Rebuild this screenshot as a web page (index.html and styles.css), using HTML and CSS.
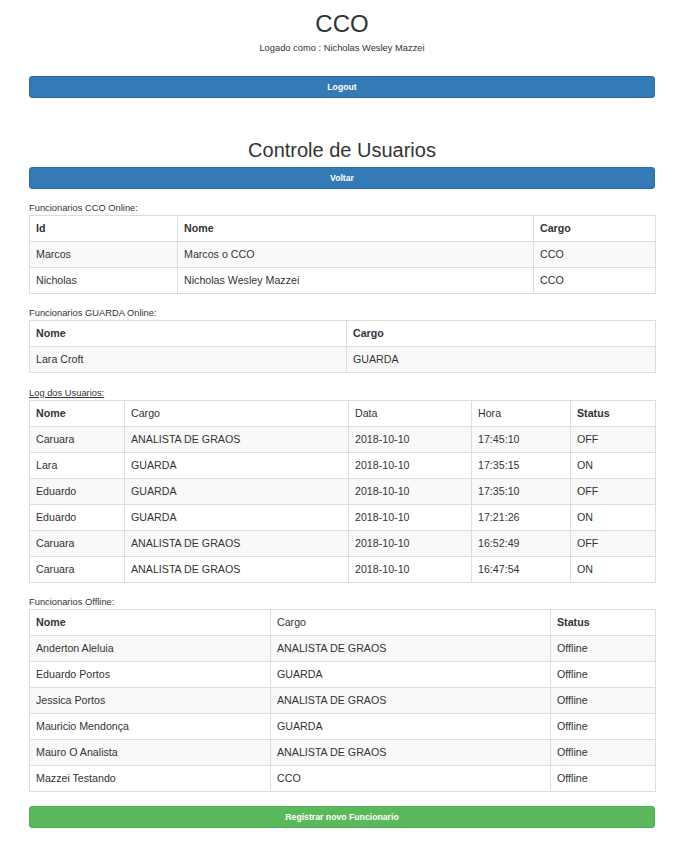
FILE: index.html
```html
<!DOCTYPE html>
<html lang="pt">
<head>
<meta charset="utf-8">
<title>CCO</title>
<link rel="stylesheet" href="styles.css">
</head>
<body>
<div class="container">
  <h1 class="title">CCO</h1>
  <p class="user">Logado como : Nicholas Wesley Mazzei</p>
  <a class="btn btn-primary btn-logout">Logout</a>

  <h2 class="subtitle">Controle de Usuarios</h2>
  <a class="btn btn-primary btn-back">Voltar</a>

  <p class="label">Funcionarios CCO Online:</p>
  <table class="grid t-cco">
    <colgroup><col class="c1"><col class="c2"><col class="c3"></colgroup>
    <thead><tr><th>Id</th><th>Nome</th><th>Cargo</th></tr></thead>
    <tbody>
      <tr><td>Marcos</td><td>Marcos o CCO</td><td>CCO</td></tr>
      <tr><td>Nicholas</td><td>Nicholas Wesley Mazzei</td><td>CCO</td></tr>
    </tbody>
  </table>

  <p class="label">Funcionarios GUARDA Online:</p>
  <table class="grid t-guarda">
    <colgroup><col class="c1"><col class="c2"></colgroup>
    <thead><tr><th>Nome</th><th>Cargo</th></tr></thead>
    <tbody>
      <tr><td>Lara Croft</td><td>GUARDA</td></tr>
    </tbody>
  </table>

  <p class="label label-link">Log dos Usuarios:</p>
  <table class="grid t-log">
    <colgroup><col class="c1"><col class="c2"><col class="c3"><col class="c4"><col class="c5"></colgroup>
    <thead><tr><th>Nome</th><th class="plain">Cargo</th><th class="plain">Data</th><th class="plain">Hora</th><th>Status</th></tr></thead>
    <tbody>
      <tr><td>Caruara</td><td>ANALISTA DE GRAOS</td><td>2018-10-10</td><td>17:45:10</td><td>OFF</td></tr>
      <tr><td>Lara</td><td>GUARDA</td><td>2018-10-10</td><td>17:35:15</td><td>ON</td></tr>
      <tr><td>Eduardo</td><td>GUARDA</td><td>2018-10-10</td><td>17:35:10</td><td>OFF</td></tr>
      <tr><td>Eduardo</td><td>GUARDA</td><td>2018-10-10</td><td>17:21:26</td><td>ON</td></tr>
      <tr><td>Caruara</td><td>ANALISTA DE GRAOS</td><td>2018-10-10</td><td>16:52:49</td><td>OFF</td></tr>
      <tr><td>Caruara</td><td>ANALISTA DE GRAOS</td><td>2018-10-10</td><td>16:47:54</td><td>ON</td></tr>
    </tbody>
  </table>

  <p class="label">Funcionarios Offline:</p>
  <table class="grid t-off">
    <colgroup><col class="c1"><col class="c2"><col class="c3"></colgroup>
    <thead><tr><th>Nome</th><th class="plain">Cargo</th><th>Status</th></tr></thead>
    <tbody>
      <tr><td>Anderton Aleluia</td><td>ANALISTA DE GRAOS</td><td>Offline</td></tr>
      <tr><td>Eduardo Portos</td><td>GUARDA</td><td>Offline</td></tr>
      <tr><td>Jessica Portos</td><td>ANALISTA DE GRAOS</td><td>Offline</td></tr>
      <tr><td>Mauricio Mendonça</td><td>GUARDA</td><td>Offline</td></tr>
      <tr><td>Mauro O Analista</td><td>ANALISTA DE GRAOS</td><td>Offline</td></tr>
      <tr><td>Mazzei Testando</td><td>CCO</td><td>Offline</td></tr>
    </tbody>
  </table>

  <a class="btn btn-success">Registrar novo Funcionario</a>
</div>
</body>
</html>
```

FILE: styles.css
```css
html, body {
  margin: 0;
  padding: 0;
  background: #fff;
}

body {
  font-family: "Liberation Sans", Arial, Helvetica, sans-serif;
  font-size: 9.33px;
  line-height: 13px;
  color: #333;
}

.container {
  width: 626px;
  margin-left: 29px;
}

.title {
  margin: 11px 0 5px;
  font-size: 24px;
  line-height: 26px;
  font-weight: normal;
  text-align: center;
}

.user {
  margin: 0;
  text-align: center;
}

.btn {
  display: block;
  box-sizing: border-box;
  width: 100%;
  padding: 4px 0;
  font-size: 8.7px;
  font-weight: bold;
  line-height: 12px;
  text-align: center;
  color: #fff;
  border: 1px solid transparent;
  border-radius: 3px;
  text-decoration: none;
}

.btn-primary {
  background: #337ab7;
  border-color: #2e6da4;
}

.btn-success {
  background: #5cb85c;
  border-color: #4cae4c;
}

.btn-logout {
  margin-top: 21px;
}

.subtitle {
  margin: 41px 0 6px;
  font-size: 20px;
  line-height: 22px;
  font-weight: normal;
  text-align: center;
}

.btn-back {
  margin-bottom: 13px;
}

.label {
  margin: 0;
  line-height: 13px;
}

.label-link {
  text-decoration: underline;
}

.grid {
  width: 626px;
  border-collapse: collapse;
  table-layout: fixed;
  margin-bottom: 13.4px;
  font-size: 10.67px;
  line-height: 15px;
}

.grid th,
.grid td {
  border: 1px solid #ddd;
  padding: 5px 6px;
  text-align: left;
  white-space: nowrap;
  overflow: hidden;
}

.grid th {
  font-weight: bold;
}

.grid th.plain {
  font-weight: normal;
}

.grid tbody tr:nth-child(odd) {
  background: #f9f9f9;
}

.t-cco .c1 { width: 148px; }
.t-cco .c2 { width: 356px; }
.t-cco .c3 { width: 122px; }

.t-guarda .c1 { width: 317px; }
.t-guarda .c2 { width: 309px; }

.t-log .c1 { width: 95px; }
.t-log .c2 { width: 224px; }
.t-log .c3 { width: 123px; }
.t-log .c4 { width: 99px; }
.t-log .c5 { width: 85px; }

.t-off .c1 { width: 241px; }
.t-off .c2 { width: 280px; }
.t-off .c3 { width: 105px; }
```
